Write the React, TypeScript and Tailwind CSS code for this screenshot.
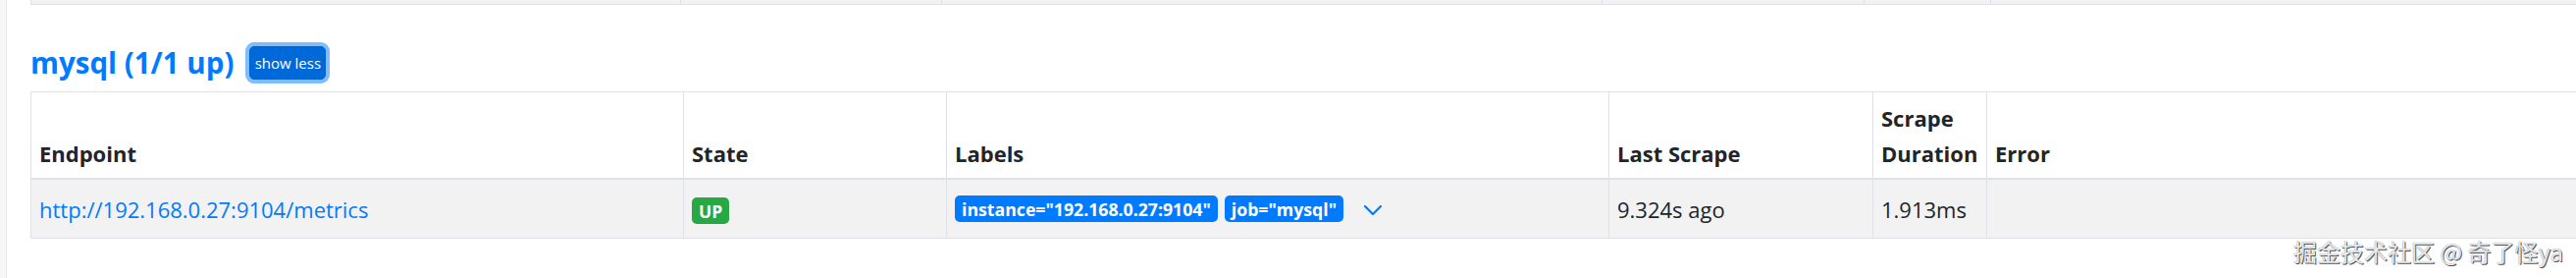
import React from "react";

const cols = [665, 268, 675, 269, 116, 700];
const topCols = [662, 266, 673, 267, 129, 700];

function Chevron() {
  return (
    <svg width="18" height="10" viewBox="0 0 18 10" fill="none" className="inline-block">
      <path d="M1 1 L9 9 L17 1" stroke="#007bff" strokeWidth="2.2" strokeLinecap="round" strokeLinejoin="round" />
    </svg>
  );
}

export default function App() {
  return (
    <div className="relative flex h-[283px] w-full overflow-hidden bg-white font-['Open_Sans',sans-serif] text-[#212529]">
      {/* left gutter */}
      <div className="w-[7px] shrink-0 border-r border-[#ebebeb] bg-[#f7f7f7]" />

      <div className="min-w-0 flex-1 pl-[24px]">
        {/* tail of the previous table */}
        <div className="flex h-[5px] border-b border-l border-[#dee2e6] bg-[#f2f2f2]">
          {topCols.map((w, i) => (
            <div key={i} style={{ width: w }} className="shrink-0 border-r border-[#dee2e6]" />
          ))}
        </div>

        {/* heading */}
        <div className="mt-[42px] flex h-[34px] items-center">
          <h2 className="text-[29.5px] font-bold leading-none text-[#007bff]">mysql (1/1 up)</h2>
          <button className="ml-[16px] h-[34px] w-[78px] rounded-[5px] border border-[#0062cc] bg-[#0069d9] text-[15px] leading-none text-white shadow-[0_0_0_4px_#80bdff]">
            show less
          </button>
        </div>

        {/* targets table */}
        <table className="mt-[12px] w-[2640px] table-fixed border-collapse text-[22px] leading-[36px]">
          <colgroup>
            {cols.map((w, i) => (
              <col key={i} style={{ width: w }} />
            ))}
          </colgroup>
          <thead>
            <tr className="border-b-2 border-[#dee2e6]">
              {["Endpoint", "State", "Labels", "Last Scrape", "Scrape Duration", "Error"].map((h) => (
                <th
                  key={h}
                  className="border border-b-2 border-[#dee2e6] px-[8px] pt-[8px] pb-[7px] text-left align-bottom font-bold"
                >
                  {h}
                </th>
              ))}
            </tr>
          </thead>
          <tbody>
            <tr className="bg-[#f2f2f2]">
              <td className="border border-[#dee2e6] px-[8px] py-[11.5px] align-middle">
                <a className="text-[#007bff]">http://192.168.0.27:9104/metrics</a>
              </td>
              <td className="border border-[#dee2e6] px-[8px] py-[11.5px] align-middle">
                <span className="inline-flex h-[27px] items-center rounded-[5px] bg-[#28a745] px-[7px] text-[17.5px] font-bold text-white">
                  UP
                </span>
              </td>
              <td className="border border-[#dee2e6] px-[8px] py-[11.5px] align-middle">
                <div className="flex items-center">
                  <span className="inline-flex h-[27px] items-center rounded-[5px] bg-[#007bff] px-[7px] text-[17.7px] font-bold text-white">
                    instance="192.168.0.27:9104"
                  </span>
                  <span className="ml-[7px] inline-flex h-[27px] items-center rounded-[5px] bg-[#007bff] px-[7px] text-[17.7px] font-bold text-white">
                    job="mysql"
                  </span>
                  <span className="ml-[21px] flex items-center pt-[3px]">
                    <Chevron />
                  </span>
                </div>
              </td>
              <td className="border border-[#dee2e6] px-[8px] py-[11.5px] align-middle">9.324s ago</td>
              <td className="border border-[#dee2e6] px-[8px] py-[11.5px] align-middle">1.913ms</td>
              <td className="border border-[#dee2e6] px-[8px] py-[11.5px] align-middle" />
            </tr>
          </tbody>
        </table>
      </div>

      {/* watermark */}
      <div className="absolute right-[13px] top-[240px] font-['Noto_Sans_CJK_SC',sans-serif] text-[24px] leading-[32px] text-[#e8e8e8] [text-shadow:1px_1px_0_#555,0_0_1px_#888]">
        掘金技术社区 @ 奇了怪ya
      </div>
    </div>
  );
}
